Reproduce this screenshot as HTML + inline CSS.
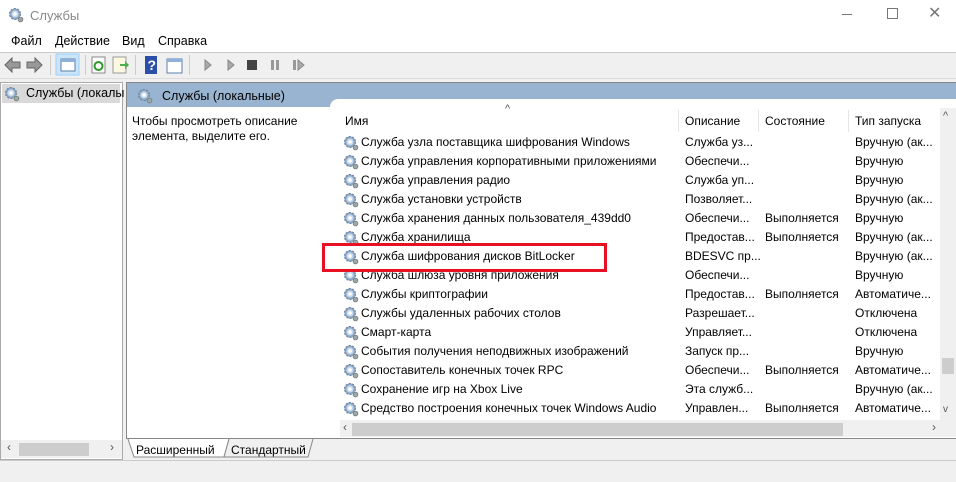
<!DOCTYPE html>
<html><head><meta charset="utf-8"><style>
*{margin:0;padding:0;box-sizing:border-box}
body{width:956px;height:482px;background:#f0f0f0;font-family:"Liberation Sans","Noto Sans CJK SC",sans-serif;font-size:12px;color:#000;position:relative;overflow:hidden}
.a{position:absolute;white-space:nowrap}
.r{position:absolute;height:19px;line-height:19px;white-space:nowrap}
</style></head><body>
<svg width="0" height="0" style="position:absolute"><defs>
<g id="g"><circle cx="7" cy="7" r="5.5" fill="#8aa6c4" stroke="#6a7f99" stroke-width="1" stroke-dasharray="2 1.5"/><circle cx="7" cy="7" r="3.6" fill="#c8d8ea"/><circle cx="7" cy="7" r="1.8" fill="#fff"/><circle cx="12.5" cy="12.5" r="2.4" fill="#9aa" stroke="#777" stroke-width=".8"/></g>
</defs></svg>
<!-- title -->
<div style="position:absolute;left:0;top:0;width:956px;height:32px;background:#fff"></div>
<svg class="a" style="left:8px;top:7px" width="16" height="16"><use href="#g"/></svg>
<div class="a" style="left:30px;top:8px;font-size:13px;color:#888">Службы</div>
<div class="a" style="left:842px;top:14px;width:10px;height:1px;background:#777"></div>
<div class="a" style="left:887px;top:8px;width:11px;height:11px;border:1px solid #777"></div>
<div class="a" style="left:928px;top:3px;font-size:16px;color:#777">✕</div>
<!-- menu -->
<div style="position:absolute;left:0;top:32px;width:956px;height:20px;background:#fff"></div>
<div class="a" style="left:11px;top:34px;font-size:12.5px">Файл</div>
<div class="a" style="left:55px;top:34px;font-size:12.5px">Действие</div>
<div class="a" style="left:122px;top:34px;font-size:12.5px">Вид</div>
<div class="a" style="left:158px;top:34px;font-size:12.5px">Справка</div>
<div class="a" style="left:0;top:52px;width:956px;height:1px;background:#ccc"></div>
<!-- toolbar -->
<svg class="a" style="left:0;top:52px" width="320" height="26">
<path d="M5 13 L12 6 V10 H20 V16 H12 V20Z" fill="#999" stroke="#666"/>
<path d="M42 13 L35 6 V10 H27 V16 H35 V20Z" fill="#999" stroke="#666"/>
<rect x="50" y="3" width="1" height="20" fill="#ccc"/>
<rect x="56" y="2" width="23" height="21" fill="#cce4f7" stroke="#99d1ff"/>
<rect x="61" y="7" width="14" height="12" fill="#fff" stroke="#5a7fa8"/><rect x="61" y="7" width="14" height="3" fill="#8fb0d8"/>
<rect x="85" y="3" width="1" height="20" fill="#ccc"/>
<rect x="92" y="5" width="13" height="16" fill="#fff" stroke="#888"/><circle cx="98.5" cy="14" r="4" fill="none" stroke="#2a9a2a" stroke-width="2"/>
<rect x="113" y="5" width="13" height="16" fill="#fff8e0" stroke="#999"/><path d="M120 12h5v-3l4 4-4 4v-3h-5z" fill="#4cb04c"/>
<rect x="135" y="3" width="1" height="20" fill="#ccc"/>
<rect x="145" y="4" width="12" height="18" fill="#2b4ea8"/><text x="147.5" y="18" fill="#fff" font-size="14" font-weight="bold" font-family="Liberation Sans">?</text>
<rect x="167" y="7" width="15" height="14" fill="#fff" stroke="#5a7fa8"/><rect x="167" y="7" width="15" height="3" fill="#8fb0d8"/>
<rect x="189" y="3" width="1" height="20" fill="#ccc"/>
<path d="M205 8 l6 5 -6 5z" fill="#aaa" stroke="#888"/>
<path d="M228 8 l6 5 -6 5z" fill="#aaa" stroke="#888"/>
<rect x="247" y="8" width="10" height="10" fill="#444"/>
<rect x="271" y="8" width="3" height="10" fill="#999"/><rect x="276" y="8" width="3" height="10" fill="#999"/>
<rect x="293" y="8" width="3" height="10" fill="#999"/><path d="M298 8 l6 5 -6 5z" fill="#aaa" stroke="#888"/>
</svg>
<div class="a" style="left:0;top:78px;width:956px;height:1px;background:#ddd"></div>
<!-- left pane -->
<div class="a" style="left:0;top:82px;width:123px;height:378px;background:#fff;border:1px solid #aaa"></div>
<div class="a" style="left:2px;top:84px;width:118px;height:19px;background:#d9d9d9"></div>
<svg class="a" style="left:4px;top:86px" width="16" height="16"><use href="#g"/></svg>
<div class="a" style="left:26px;top:86px;font-size:12.5px">Службы (локалы</div>
<div class="a" style="left:1px;top:440px;width:121px;height:18px;background:#f0f0f0"></div>
<div class="a" style="left:19px;top:443px;width:70px;height:13px;background:#cdcdcd"></div>
<div class="a" style="left:7px;top:440px;color:#555;font-size:12px">‹</div>
<div class="a" style="left:110px;top:440px;color:#555;font-size:12px">›</div>
<!-- right panel -->
<div class="a" style="left:126px;top:82px;width:830px;height:357px;background:#fff;border-left:1px solid #888;border-top:1px solid #888"></div>
<div class="a" style="left:127px;top:83px;width:829px;height:24px;background:#99b4d1"></div>
<div class="a" style="left:330px;top:99px;width:626px;height:10px;background:#fff;border-radius:8px 0 0 0"></div>
<svg class="a" style="left:137px;top:88px" width="16" height="16"><use href="#g"/></svg>
<div class="a" style="left:162px;top:89px;font-size:12.5px">Службы (локальные)</div>
<div class="a" style="left:132px;top:114px;line-height:15px">Чтобы просмотреть описание<br>элемента, выделите его.</div>
<!-- list header -->
<div class="a" style="left:505px;top:103px;color:#555;font-size:11px">^</div>
<div class="a" style="left:345px;top:114px;font-size:12px">Имя</div>
<div class="a" style="left:678px;top:110px;width:1px;height:22px;background:#e5e5e5"></div>
<div class="a" style="left:685px;top:114px">Описание</div>
<div class="a" style="left:758px;top:110px;width:1px;height:22px;background:#e5e5e5"></div>
<div class="a" style="left:765px;top:114px">Состояние</div>
<div class="a" style="left:848px;top:110px;width:1px;height:22px;background:#e5e5e5"></div>
<div class="a" style="left:855px;top:114px">Тип запуска</div>
<!-- vscroll -->
<div class="a" style="left:940px;top:108px;width:16px;height:312px;background:#f0f0f0"></div>
<div class="a" style="left:943px;top:110px;color:#555;font-size:11px">^</div>
<div class="a" style="left:942px;top:358px;width:12px;height:16px;background:#cdcdcd"></div>
<div class="a" style="left:943px;top:404px;color:#555;font-size:10px">v</div>
<div id="rows"></div>
<!-- hscroll -->
<div class="a" style="left:340px;top:420px;width:616px;height:17px;background:#f0f0f0"></div>
<div class="a" style="left:352px;top:423px;width:491px;height:13px;background:#cdcdcd"></div>
<div class="a" style="left:343px;top:420px;color:#555">‹</div>
<div class="a" style="left:932px;top:420px;color:#555">›</div>
<div class="a" style="left:126px;top:438px;width:830px;height:1px;background:#888"></div>
<!-- tabs -->
<svg class="a" style="left:126px;top:439px" width="200" height="20">
<path d="M2 0 L8 18 H98 L103 0" fill="#fff" stroke="#888"/>
<path d="M103 0 L98 18 L100 18 H182 L187 0" fill="#f0f0f0" stroke="#888"/>
</svg>
<div class="a" style="left:136px;top:443px">Расширенный</div>
<div class="a" style="left:231px;top:443px">Стандартный</div>
<div class="a" style="left:0;top:460px;width:956px;height:1px;background:#ccc"></div>
<!-- red box -->
<div class="a" style="left:322px;top:243px;width:285px;height:29px;border:3px solid #e81123"></div>
<script>
var d=[["Служба узла поставщика шифрования Windows","Служба уз...","","Вручную (ак..."],
["Служба управления корпоративными приложениями","Обеспечи...","","Вручную"],
["Служба управления радио","Служба уп...","","Вручную"],
["Служба установки устройств","Позволяет...","","Вручную (ак..."],
["Служба хранения данных пользователя_439dd0","Обеспечи...","Выполняется","Вручную"],
["Служба хранилища","Предостав...","Выполняется","Вручную (ак..."],
["Служба шифрования дисков BitLocker","BDESVC пр...","","Вручную (ак..."],
["Служба шлюза уровня приложения","Обеспечи...","","Вручную"],
["Службы криптографии","Предостав...","Выполняется","Автоматиче..."],
["Службы удаленных рабочих столов","Разрешает...","","Отключена"],
["Смарт-карта","Управляет...","","Отключена"],
["События получения неподвижных изображений","Запуск пр...","","Вручную"],
["Сопоставитель конечных точек RPC","Обеспечи...","Выполняется","Автоматиче..."],
["Сохранение игр на Xbox Live","Эта служб...","","Вручную (ак..."],
["Средство построения конечных точек Windows Audio","Управлен...","Выполняется","Автоматиче..."]];
var h="";d.forEach(function(r,i){var y=133+i*19;
h+='<svg class="a" style="left:343px;top:'+(y+2)+'px" width="16" height="16"><use href="#g"/></svg>';
h+='<div class="r" style="left:361px;top:'+y+'px">'+r[0]+'</div>';
h+='<div class="r" style="left:685px;top:'+y+'px">'+r[1]+'</div>';
h+='<div class="r" style="left:765px;top:'+y+'px">'+r[2]+'</div>';
h+='<div class="r" style="left:855px;top:'+y+'px">'+r[3]+'</div>';});
document.getElementById("rows").innerHTML=h;
</script>
</body></html>
